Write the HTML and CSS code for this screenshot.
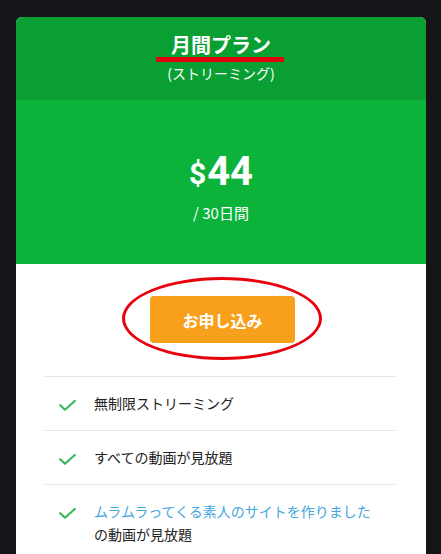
FILE: index.html
```html
<!DOCTYPE html>
<html lang="ja">
<head>
<meta charset="utf-8">
<title>月間プラン</title>
<link rel="stylesheet" href="styles.css">
</head>
<body>
<div class="card">
  <div class="card-head">
    <div class="plan-title"><span class="plan-name">月間プラン</span></div>
    <div class="plan-sub">(ストリーミング)</div>
  </div>
  <div class="card-price">
    <div class="price"><span class="currency">$</span>44</div>
    <div class="period">/ 30日間</div>
  </div>
  <div class="card-body">
    <div class="cta-wrap">
      <a class="cta" href="#">お申し込み</a>
      <span class="cta-ring"></span>
    </div>
    <ul class="features">
      <li class="feature">
        <span class="check"><svg width="17" height="11" viewBox="0 0 17 11"><polyline points="1.2,5.2 6,9.8 15.8,1" fill="none" stroke="#3bb75a" stroke-width="2.2" stroke-linecap="round" stroke-linejoin="round"/></svg></span>
        <span class="feature-text">無制限ストリーミング</span>
      </li>
      <li class="feature">
        <span class="check"><svg width="17" height="11" viewBox="0 0 17 11"><polyline points="1.2,5.2 6,9.8 15.8,1" fill="none" stroke="#3bb75a" stroke-width="2.2" stroke-linecap="round" stroke-linejoin="round"/></svg></span>
        <span class="feature-text">すべての動画が見放題</span>
      </li>
      <li class="feature">
        <span class="check"><svg width="17" height="11" viewBox="0 0 17 11"><polyline points="1.2,5.2 6,9.8 15.8,1" fill="none" stroke="#3bb75a" stroke-width="2.2" stroke-linecap="round" stroke-linejoin="round"/></svg></span>
        <span class="feature-text"><a class="site-link" href="#">ムラムラってくる素人のサイトを作りました</a>の動画が見放題</span>
      </li>
    </ul>
  </div>
</div>
</body>
</html>
```

FILE: styles.css
```css
* { box-sizing: border-box; }

html, body {
  margin: 0;
  background: #141419;
}

body {
  padding: 17px 15px 0 16px;
  font-family: "Noto Sans CJK JP", "Noto Sans", sans-serif;
  color: #333;
}

.card {
  width: 410px;
  background: #fff;
  border-radius: 6px 6px 0 0;
  overflow: hidden;
}

.card-head {
  background: #0a9f33;
  padding: 16px 0 17px;
  text-align: center;
  color: #fff;
}

.plan-title {
  font-size: 20px;
  line-height: 24px;
  font-weight: 700;
}

.plan-name {
  position: relative;
  display: inline-block;
}

.plan-name::after {
  content: "";
  position: absolute;
  left: -15px;
  right: -13px;
  bottom: -5px;
  height: 5px;
  background: #e2000c;
  border-radius: 1px;
}

.plan-sub {
  margin-top: 6px;
  font-size: 14px;
  line-height: 20px;
}

.card-price {
  background: #0cb33b;
  padding: 50px 0 41px;
  text-align: center;
  color: #fff;
}

.price {
  font-family: Roboto, "Liberation Sans", sans-serif;
  font-weight: 700;
  font-size: 40px;
  line-height: 44px;
  height: 44px;
}

.currency {
  font-size: 30px;
  line-height: 0;
  position: relative;
  top: -1px;
  margin-right: 1px;
}

.period {
  margin-top: 9px;
  font-size: 15px;
  line-height: 20px;
}

.card-body {
  padding-top: 32px;
}

.cta-wrap {
  position: relative;
  display: flex;
  justify-content: center;
  padding-left: 3px;
}

.cta {
  display: flex;
  align-items: center;
  justify-content: center;
  width: 145px;
  height: 47px;
  background: #f8a01b;
  border-radius: 4px;
  color: #fff;
  font-weight: 700;
  font-size: 16px;
  text-decoration: none;
}

.cta-ring {
  position: absolute;
  left: 106px;
  top: -19px;
  width: 200px;
  height: 83px;
  border: 3.5px solid #e8000d;
  border-radius: 50%;
  pointer-events: none;
}

.features {
  list-style: none;
  margin: 33px 31px 0 29px;
  padding: 0;
}

.feature {
  display: flex;
  align-items: flex-start;
  gap: 18px;
  border-top: 1px solid #e4e4e4;
  padding: 15px 15px 15px 14px;
  font-size: 14px;
  line-height: 23px;
  color: #222;
}

.check {
  flex: none;
  width: 17px;
  height: 23px;
  display: flex;
  align-items: center;
  padding-top: 3px;
}

.check svg { display: block; }

.site-link {
  color: #45a6de;
  text-decoration: none;
}
```
